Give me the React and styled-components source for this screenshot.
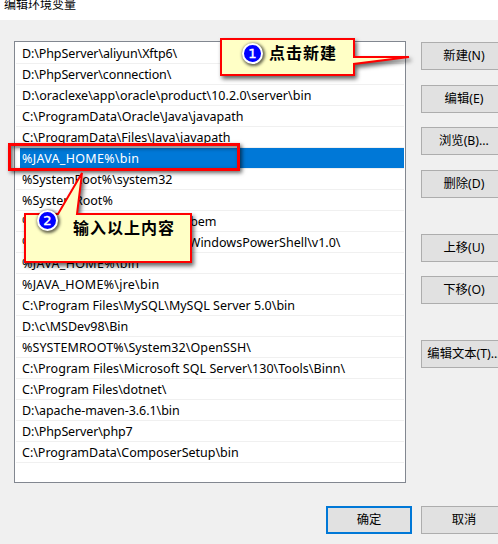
import React from "react";
import styled, { createGlobalStyle } from "styled-components";

const Global = createGlobalStyle`
  * { box-sizing: border-box; }
  html, body { margin: 0; overflow: hidden; }
`;

const Dialog = styled.main`
  position: relative;
  display: flex;
  flex-direction: column;
  width: 498px;
  height: 544px;
  overflow: hidden;
  background: #f0f0f0;
  color: #000;
  font: 12px "Noto Sans", "Noto Sans CJK SC", sans-serif;
`;

const Title = styled.header`
  flex: none;
  height: 20px;
  padding-left: 4px;
  background: #fff;
  line-height: 10px;
`;

const Body = styled.div`
  display: flex;
  gap: 15px;
  padding: 21px 0 0 14px;
`;

const List = styled.ul`
  flex: none;
  width: 392px;
  height: 442px;
  margin: 0;
  padding: 1px;
  list-style: none;
  background: #fff;
  border: 1px solid #828790;
`;

const Row = styled.li`
  height: 21px;
  padding-left: 4px;
  border-bottom: 1px solid #f0f0f0;
`;

const Path = styled.span`
  display: block;
  height: 20px;
  padding-left: 2px;
  font-size: 12.5px;
  line-height: 22px;
  white-space: pre;
  letter-spacing: ${(p) => p.$track}px;
  color: ${(p) => (p.$selected ? "#fff" : "#000")};
  background: ${(p) => (p.$selected ? "#0078d7" : "transparent")};
`;

const Side = styled.div`
  display: flex;
  flex-direction: column;
`;

const Button = styled.button`
  flex: none;
  width: 86px;
  height: 28px;
  margin: ${(p) => p.$top || 0}px 0 0;
  padding: 0;
  border: ${(p) => (p.$primary ? "2px solid #0078d7" : "1px solid #adadad")};
  background: #e1e1e1;
  color: #000;
  font: 12.3px "Noto Sans", "Noto Sans CJK SC", sans-serif;
  line-height: 24px;
  white-space: nowrap;
`;

const Footer = styled.footer`
  display: flex;
  gap: 9px;
  padding: 23px 0 0 326px;
`;

const Highlight = styled.div`
  position: absolute;
  left: 8px;
  top: 143px;
  width: 232px;
  height: 28px;
  border: 3px solid #f00;
  box-shadow: 2px 2px 4px rgba(0, 0, 0, 0.6), inset 2px 2px 4px rgba(0, 0, 0, 0.55);
`;

const Bubble = styled.svg`
  position: absolute;
  left: 0;
  top: 0;
  width: 498px;
  height: 300px;
  pointer-events: none;
  filter: drop-shadow(2px 3px 2px rgba(0, 0, 0, 0.6));
  fill: #ffffc6;
  stroke: #f00;
  stroke-width: 2px;
`;

const Badge = styled.div`
  position: absolute;
  left: ${(p) => p.$x}px;
  top: ${(p) => p.$y}px;
  width: 21px;
  height: 21px;
  border: 2px solid #fff;
  border-radius: 50%;
  background: #00f;
  box-shadow: 1px 1px 3px 1px rgba(0, 0, 0, 0.6);
  color: #fff;
  font: 13px/17px "DejaVu Sans", sans-serif;
  -webkit-text-stroke: 0.4px #fff;
  text-align: center;
`;

const Note = styled.div`
  position: absolute;
  left: ${(p) => p.$x}px;
  top: ${(p) => p.$y}px;
  font: bold 16px/20px "Noto Sans CJK SC", sans-serif;
  letter-spacing: 1px;
  white-space: nowrap;
`;

const paths = [
  { text: "D:\\PhpServer\\aliyun\\Xftp6\\", track: -0.11 },
  { text: "D:\\PhpServer\\connection\\", track: -0.12 },
  { text: "D:\\oraclexe\\app\\oracle\\product\\10.2.0\\server\\bin", track: 0.01 },
  { text: "C:\\ProgramData\\Oracle\\Java\\javapath", track: 0.01 },
  { text: "C:\\ProgramData\\Files\\Java\\javapath", track: -0.02 },
  { text: "%JAVA_HOME%\\bin", track: 0.3, selected: true },
  { text: "%SystemRoot%\\system32", track: -0.04 },
  { text: "%SystemRoot%", track: 0.01 },
  { text: "%SystemRoot%\\System32\\Wbem", track: -0.01 },
  { text: "%SYSTEMROOT%\\System32\\WindowsPowerShell\\v1.0\\", track: 0 },
  { text: "%JAVA_HOME%\\bin", track: 0.3 },
  { text: "%JAVA_HOME%\\jre\\bin", track: 0.25 },
  { text: "C:\\Program Files\\MySQL\\MySQL Server 5.0\\bin", track: 0.01 },
  { text: "D:\\c\\MSDev98\\Bin", track: 0 },
  { text: "%SYSTEMROOT%\\System32\\OpenSSH\\", track: 0.08 },
  { text: "C:\\Program Files\\Microsoft SQL Server\\130\\Tools\\Binn\\", track: 0.04 },
  { text: "C:\\Program Files\\dotnet\\", track: -0.02 },
  { text: "D:\\apache-maven-3.6.1\\bin", track: -0.05 },
  { text: "D:\\PhpServer\\php7", track: -0.12 },
  { text: "C:\\ProgramData\\ComposerSetup\\bin", track: -0.02 },
];

const actions = [
  { label: "新建(N)", top: 1 },
  { label: "编辑(E)", top: 15 },
  { label: "浏览(B)...", top: 14 },
  { label: "删除(D)", top: 15 },
  { label: "上移(U)", top: 36 },
  { label: "下移(O)", top: 14 },
  { label: "编辑文本(T)...", top: 36 },
];

export default function App() {
  return (
    <>
      <Global />
      <Dialog>
        <Title>编辑环境变量</Title>
        <Body>
          <List>
            {paths.map((p, i) => (
              <Row key={i}>
                <Path $track={p.track} $selected={p.selected}>{p.text}</Path>
              </Row>
            ))}
          </List>
          <Side>
            {actions.map((a) => (
              <Button key={a.label} $top={a.top}>{a.label}</Button>
            ))}
          </Side>
        </Body>
        <Footer>
          <Button $primary>确定</Button>
          <Button>取消</Button>
        </Footer>

        <Highlight />
        <Bubble viewBox="0 0 498 300">
          <path d="M221 39H354V57L409 57L354 64V75H221Z" />
        </Bubble>
        <Bubble viewBox="0 0 498 300">
          <path d="M25 214H58L82 173L77 214H191V262H25Z" />
        </Bubble>
        <Badge $x={242} $y={43}>1</Badge>
        <Note $x={269} $y={42}>点击新建</Note>
        <Badge $x={37} $y={210}>2</Badge>
        <Note $x={73} $y={217}>输入以上内容</Note>
      </Dialog>
    </>
  );
}
